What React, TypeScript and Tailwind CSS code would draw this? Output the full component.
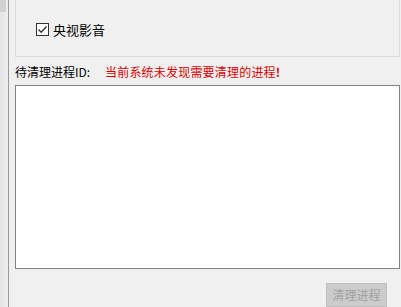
import React from 'react';

const font = { fontFamily: '"Noto Sans CJK SC", "DejaVu Sans", sans-serif' };

export default function App() {
    return (
        <div className="w-[401px] h-[307px] bg-[#f0f0f0] flex overflow-hidden text-[12px] leading-none text-black" style={font}>
            {/* left docked strip */}
            <div className="w-[8px] h-full bg-gradient-to-r from-[#e4e4e4] to-[#efefef] flex flex-col">
                <div className="h-[12px] w-[6px] bg-[#d2d2d2]" />
            </div>
            <div className="w-px h-full bg-[#9a9a9a]" />

            <div className="flex-1 flex flex-col pl-[6px] pr-px">
                {/* group box (top edge scrolled off) */}
                <div className="h-[57px] border-x border-b border-[#dcdcdc] pl-[20px] pt-[23px]">
                    <label className="flex items-center gap-[4px]">
                        <span className="w-[13px] h-[13px] border border-[#333] bg-white flex items-center justify-center">
                            <svg width="11" height="11" viewBox="0 0 11 11">
                                <path d="M1.5 5.5 L4.2 8.2 L9.5 2.5" fill="none" stroke="#333" strokeWidth="1.4" />
                            </svg>
                        </span>
                        <span className="text-[13px]">央视影音</span>
                    </label>
                </div>

                <div className="h-[28px] flex items-center pt-px">
                    <span className="w-[90px] shrink-0">待清理进程ID:</span>
                    <span className="text-[#dc0000] tracking-[0.2px]">当前系统未发现需要清理的进程<b>!</b></span>
                </div>

                <div className="h-[184px] bg-white border border-[#828282]" />

                <div className="flex justify-end pr-[13px] pt-[14px]">
                    <button className="w-[61px] h-[24px] bg-[#cccccc] border border-[#bfbfbf] text-[#a2a2a2] text-[12px]">
                        清理进程
                    </button>
                </div>
            </div>
        </div>
    );
}
